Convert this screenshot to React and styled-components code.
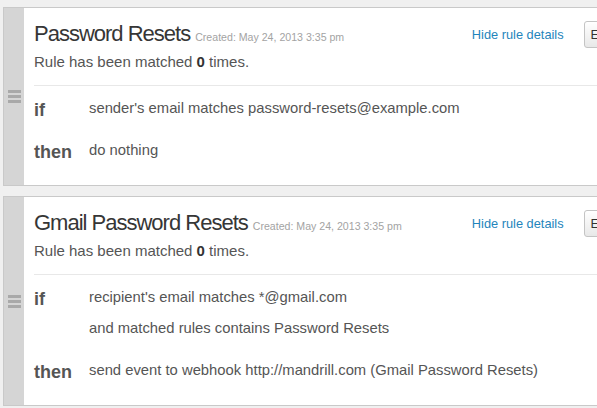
import styled, { createGlobalStyle } from "styled-components"

const GlobalStyle = createGlobalStyle`
    html, body {
        margin: 0;
        padding: 0;
        background: #f0f0f0;
        overflow: hidden;
        font-family: "Liberation Sans", Arial, sans-serif;
    }
`

const rules = [
    {
        name: "Password Resets",
        created: "May 24, 2013 3:35 pm",
        matched: 0,
        conditions: ["sender's email matches password-resets@example.com"],
        actions: ["do nothing"],
    },
    {
        name: "Gmail Password Resets",
        created: "May 24, 2013 3:35 pm",
        matched: 0,
        conditions: [
            "recipient's email matches *@gmail.com",
            "and matched rules contains Password Resets",
        ],
        actions: ["send event to webhook http://mandrill.com (Gmail Password Resets)"],
    },
]

const Rule = ({ rule }) => (
    <Card>
        <Handle>
            <span />
            <span />
            <span />
        </Handle>
        <Body>
            <Header>
                <div>
                    <TitleLine>
                        <Title>{rule.name}</Title>
                        <Created>Created: {rule.created}</Created>
                    </TitleLine>
                    <Matched>
                        Rule has been matched <b>{rule.matched}</b> times.
                    </Matched>
                </div>
                <Actions>
                    <DetailsLink href="#">Hide rule details</DetailsLink>
                    <Button>Edit</Button>
                </Actions>
            </Header>
            <Divider />
            <Clauses>
                <Label>if</Label>
                <div>
                    {rule.conditions.map((c) => (
                        <Clause key={c}>{c}</Clause>
                    ))}
                </div>
                <Label>then</Label>
                <div>
                    {rule.actions.map((a) => (
                        <Clause key={a}>{a}</Clause>
                    ))}
                </div>
            </Clauses>
        </Body>
    </Card>
)

const App = () => {
    return (
        <Page>
            <GlobalStyle />
            {rules.map((r) => (
                <Rule key={r.name} rule={r} />
            ))}
        </Page>
    )
}

const Page = styled.div`
    width: 628px;
    padding: 7px 0 0 3px;
    display: flex;
    flex-direction: column;
    gap: 10px;
`

const Card = styled.div`
    display: flex;
    border: 1px solid #c9c9c9;
    background: #fff;
`

const Handle = styled.div`
    width: 20px;
    flex-shrink: 0;
    background: #d5d5d5;
    display: flex;
    flex-direction: column;
    justify-content: center;
    align-items: center;
    gap: 2px;
    span{
        display: block;
        width: 13px;
        height: 3px;
        background: #a9a9a9;
    }
`

const Body = styled.div`
    flex: 1;
    padding: 13px 0 12px 10px;
`

const Header = styled.div`
    display: flex;
    justify-content: space-between;
    align-items: flex-start;
    padding-right: 10px;
`

const TitleLine = styled.div`
    font-size: 22px;
    line-height: 26px;
    white-space: nowrap;
`

const Title = styled.span`
    letter-spacing: -1px;
    color: #363636;
`

const Created = styled.span`
    font-size: 10.6px;
    line-height: 1;
    color: #a3a3a3;
    margin-left: 5px;
`

const Matched = styled.p`
    margin: 5px 0 0;
    font-size: 15px;
    line-height: 20px;
    color: #555;
    b{
        color: #333;
    }
`

const Actions = styled.div`
    display: flex;
    align-items: center;
    gap: 20px;
`

const DetailsLink = styled.a`
    font-size: 12.8px;
    line-height: 25px;
    color: #1f85bc;
    text-decoration: none;
`

const Button = styled.button`
    height: 27px;
    padding: 0 6px;
    font-family: inherit;
    font-size: 13px;
    color: #333;
    border: 1px solid #c4c4c4;
    border-radius: 3px;
    background: linear-gradient(#ffffff, #e8e8e8);
    box-shadow: inset 0 1px 0 #fff;
`

const Divider = styled.hr`
    margin: 13px 0 0;
    border: none;
    border-top: 1px solid #e8e8e8;
`

const Clauses = styled.div`
    display: grid;
    grid-template-columns: 55px 1fr;
    row-gap: 11px;
    padding-top: 14px;
    align-items: start;
`

const Label = styled.div`
    font-size: 18px;
    font-weight: bold;
    line-height: 20px;
    color: #555;
`

const Clause = styled.p`
    margin: 0 0 15px;
    font-size: 14.8px;
    line-height: 16px;
    color: #555;
`

export default App
